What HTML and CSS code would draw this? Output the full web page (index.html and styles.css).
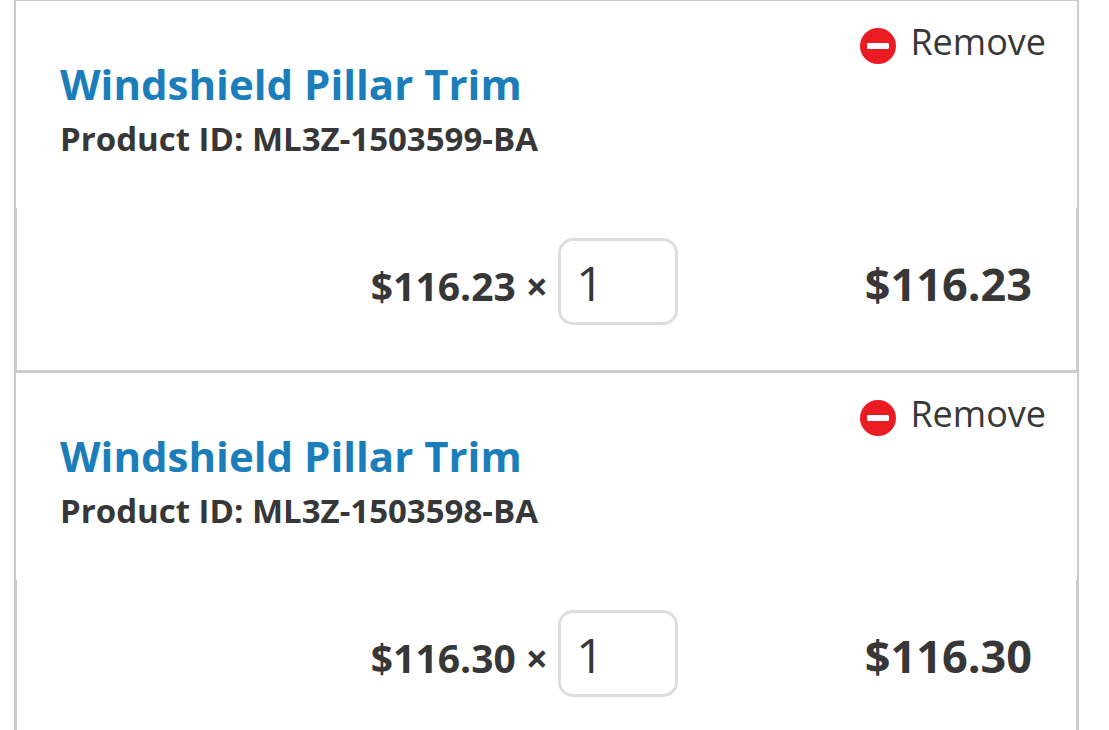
FILE: index.html
```html
<!DOCTYPE html>
<html lang="en">
<head>
    <meta charset="UTF-8">
    <meta name="viewport" content="width=device-width, initial-scale=1.0">
    <title>Shopping Cart</title>
    <link rel="stylesheet" href="styles.css">
</head>
<body>

    <main class="cart">

        <section class="cart-item">
            <div class="item-info">
                <div class="item-details">
                    <h2 class="item-title"><a href="#">Windshield Pillar Trim</a></h2>
                    <p class="item-id">Product ID: ML3Z-1503599-BA</p>
                </div>
                <button type="button" class="remove-button">
                    <svg class="remove-icon" viewBox="0 0 36 36" aria-hidden="true">
                        <circle cx="18" cy="18" r="18" fill="#ea1b22"/>
                        <rect x="7" y="15" width="22" height="6" rx="1.5" fill="#ffffff"/>
                    </svg>
                    Remove
                </button>
            </div>
            <div class="item-pricing">
                <div class="item-quantity">
                    <label for="quantity1">$116.23 ×</label>
                    <input type="text" id="quantity1" class="quantity-input" value="1">
                </div>
                <div class="item-total">$116.23</div>
            </div>
        </section>

        <section class="cart-item">
            <div class="item-info">
                <div class="item-details">
                    <h2 class="item-title"><a href="#">Windshield Pillar Trim</a></h2>
                    <p class="item-id">Product ID: ML3Z-1503598-BA</p>
                </div>
                <button type="button" class="remove-button">
                    <svg class="remove-icon" viewBox="0 0 36 36" aria-hidden="true">
                        <circle cx="18" cy="18" r="18" fill="#ea1b22"/>
                        <rect x="7" y="15" width="22" height="6" rx="1.5" fill="#ffffff"/>
                    </svg>
                    Remove
                </button>
            </div>
            <div class="item-pricing">
                <div class="item-quantity">
                    <label for="quantity2">$116.30 ×</label>
                    <input type="text" id="quantity2" class="quantity-input" value="1">
                </div>
                <div class="item-total">$116.30</div>
            </div>
        </section>

    </main>

</body>
</html>
```
FILE: styles.css
```css
* {
    box-sizing: border-box;
}

body {
    margin: 0;
    padding: 0 30px 0 14px;
    background-color: #ffffff;
    color: #373737;
    font-family: "Open Sans", sans-serif;
}

.cart {
    border-top: 1px solid #cccccc;
}

.item-info {
    display: flex;
    justify-content: space-between;
    align-items: flex-start;
    padding: 17px 31px 41px 44px;
    border: solid #cccccc;
    border-width: 0 2px;
}

.item-details {
    padding-top: 39px;
}

.item-title,
.item-id {
    margin: 0;
    font-weight: 700;
}

.item-title {
    font-size: 42px;
    line-height: 54px;
}

.item-title a {
    color: #1b7eba;
    text-decoration: none;
}

.item-title a:hover {
    text-decoration: underline;
}

.item-id {
    font-size: 33px;
    line-height: 56px;
}

.remove-button {
    display: flex;
    align-items: center;
    gap: 14px;
    padding: 0;
    border: none;
    background: none;
    color: inherit;
    font-family: inherit;
    font-size: 36px;
    line-height: 48px;
    cursor: pointer;
}

.remove-icon {
    width: 36px;
    height: 36px;
    margin-top: 8px;
}

.item-pricing {
    display: grid;
    grid-template-columns: 7fr 4fr;
    align-items: baseline;
    padding: 30px 44px 45px 42px;
    border: solid #cccccc;
    border-width: 0 3px 3px;
    font-weight: 700;
}

.item-quantity {
    display: flex;
    justify-content: flex-end;
    align-items: baseline;
    gap: 10px;
    font-size: 39px;
}

.quantity-input {
    width: 120px;
    height: 87px;
    padding: 2px 15px 0;
    border: 3px solid #dcdddd;
    border-radius: 15px;
    background-color: #ffffff;
    color: inherit;
    font-family: inherit;
    font-size: 48px;
}

.item-total {
    font-size: 45px;
    text-align: right;
}
```
